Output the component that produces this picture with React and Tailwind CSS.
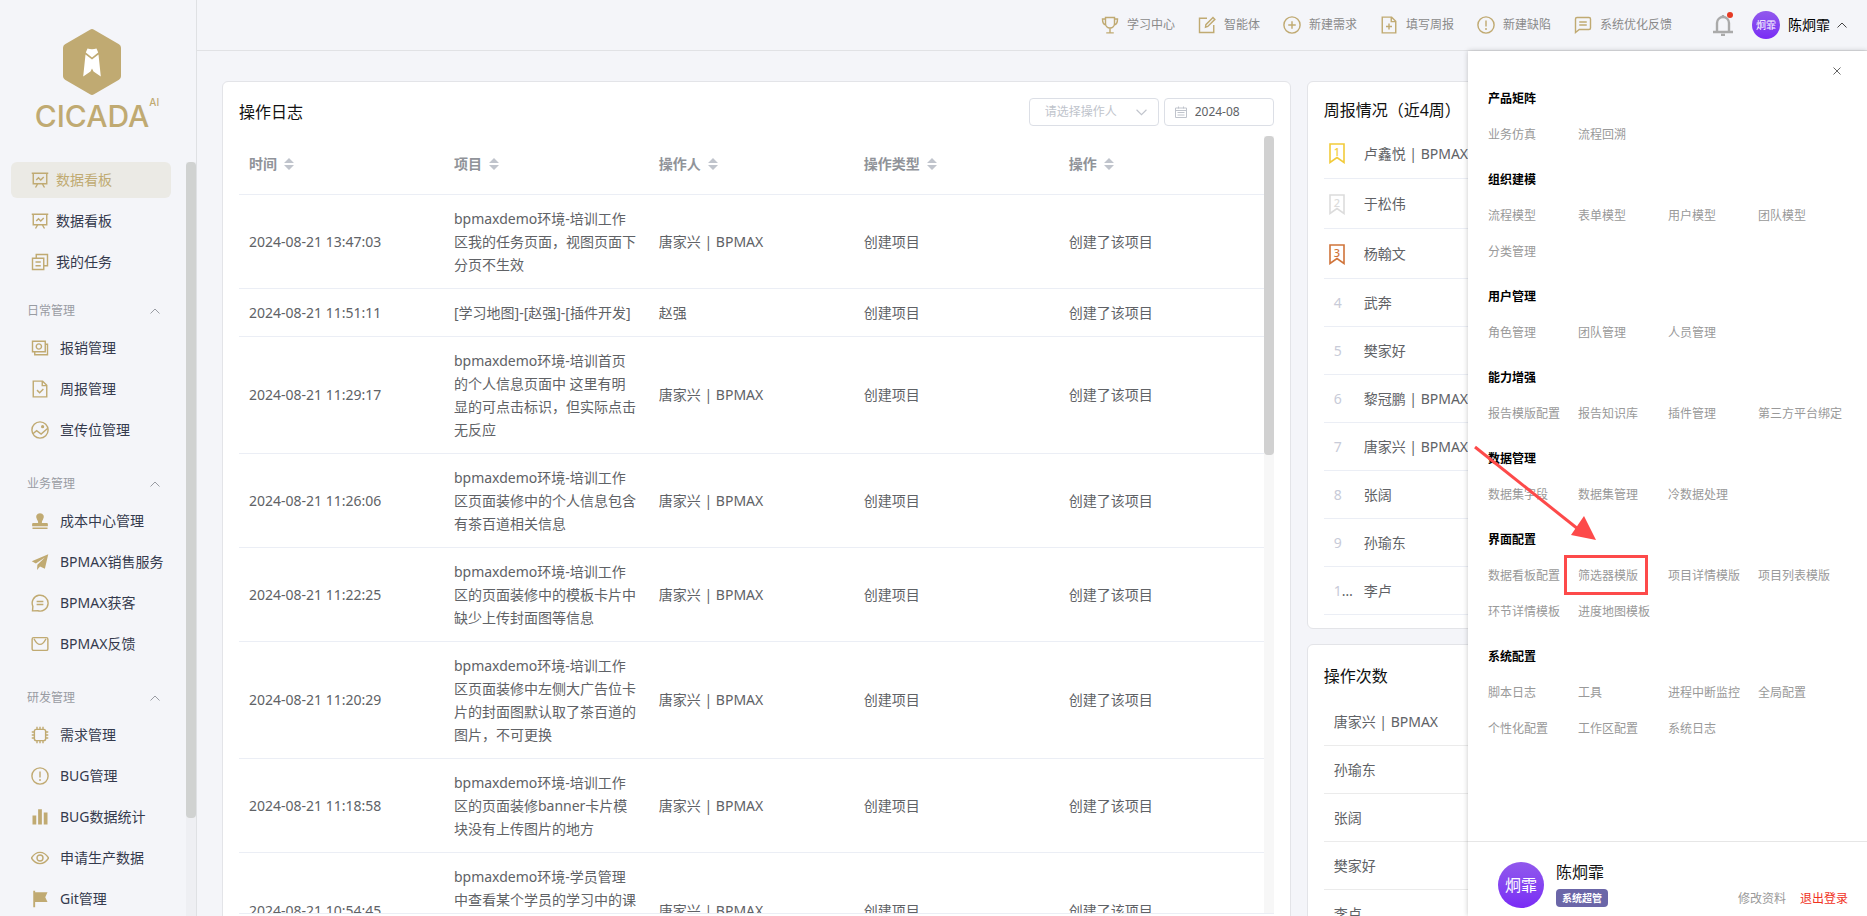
import { useState } from "react";

const gold = "#c0aa72";

const icons = {
    board: (
        <>
            <path d="M1 3h22M3 3v14h18V3M9 17l-3 5M15 17l3 5" />
            <path d="M7 12l3-3 3 3 4-4" />
        </>
    ),
    task: (
        <>
            <path d="M2 7h15v15H2z" />
            <path d="M7 7V2h15v15h-5M6 12h7M6 17h7" />
        </>
    ),
    cash: (
        <>
            <path d="M2 3h17v14H2z" />
            <circle cx="10.500" cy="10" r="3.500" />
            <path d="M19 7h3v14H5v-4" />
        </>
    ),
    fileCheck: (
        <>
            <path d="M3 1.500h12.500l5.500 5.500v15.500H3zM15 2v5.500h5.500" />
            <path d="M8 13.500l3.500 3.500 5-5" />
        </>
    ),
    filePlus: (
        <>
            <path d="M3 1.500h12.500l5.500 5.500v15.500H3zM15 2v5.500h5.500" />
            <path d="M12 10v8M8 14h8" />
        </>
    ),
    picture: (
        <>
            <circle cx="12" cy="12" r="10.800" />
            <path d="M2.500 17l5-4 6 4.500 8.500-7.500" />
            <circle cx="15.500" cy="7.500" r="1.200" fill="currentColor" />
        </>
    ),
    stamp: (
        <path
            stroke="none"
            fill="currentColor"
            d="M12 1.500a5.200 5.200 0 0 1 4 8.500c-1.200 1.500-1.700 3-1.500 4.500H21c.8 0 1.500.7 1.500 1.500v3h-21v-3c0-.8.7-1.500 1.500-1.500h6.500c.2-1.500-.3-3-1.500-4.500a5.200 5.200 0 0 1 4-8.500zM2 20.500h20v2H2z"
        />
    ),
    plane: (
        <path
            stroke="none"
            fill="currentColor"
            d="M23 1.500L1 11l5.500 3L18.500 6 8.500 15.500 8 22.500l4-4.500 6.500 3z"
        />
    ),
    chat: (
        <>
            <path d="M2 22.500l.5-6A10.600 10.600 0 1 1 9 22.300z" />
            <path d="M7.500 10h9M7.500 14h9" />
        </>
    ),
    mail: (
        <>
            <rect x="1.500" y="3.500" width="21" height="17" rx="2" />
            <path d="M4 5c3 6 6 7.500 8 7.500S17 11 20 5" />
        </>
    ),
    chip: (
        <>
            <rect x="4.500" y="4.500" width="15" height="15" rx="2.500" />
            <path d="M8 4.500V1M12 4.500V1M16 4.500V1M8 23v-3.500M12 23v-3.500M16 23v-3.500M4.500 8H1M4.500 12H1M4.500 16H1M23 8h-3.500M23 12h-3.500M23 16h-3.500" />
        </>
    ),
    warn: (
        <>
            <circle cx="12" cy="12" r="10.800" />
            <path d="M12 6v8M12 16v2.500" />
        </>
    ),
    bars: <path stroke="none" fill="currentColor" d="M2 10h5v12H2zM9.500 1.500h5V22h-5zM17 6h5v16h-5z" />,
    eye: (
        <>
            <path d="M.5 12C4 6.500 8 4.500 12 4.500S20 6.500 23.500 12C20 17.500 16 19.500 12 19.500S4 17.500.5 12z" />
            <circle cx="12" cy="12" r="4" />
        </>
    ),
    flag: <path stroke="none" fill="currentColor" d="M3 1h2.500v2H22l-3 6.500 3 6.500H5.500v7H3z" />,
    trophy: (
        <>
            <path d="M6 2h12v8a6 6 0 0 1-12 0zM6 4H2c0 5 1.500 7.500 4.500 8M18 4h4c0 5-1.500 7.500-4.500 8M12 16v6M7 22.500h10" />
        </>
    ),
    edit: (
        <>
            <path d="M12 3H2v19h19V12" />
            <path d="M10 15l.5-3.500 9.500-9.500 2.500 2.500-9.500 9.500z" />
        </>
    ),
    plus: (
        <>
            <circle cx="12" cy="12" r="10.800" />
            <path d="M12 7v10M7 12h10" />
        </>
    ),
    note: (
        <>
            <path d="M4 2h16a2 2 0 0 1 2 2v12a2 2 0 0 1-2 2H7l-5 4V4a2 2 0 0 1 2-2z" />
            <path d="M7 8h10M7 12h10" />
        </>
    ),
};

const topMenus = [
    { icon: "board", name: "数据看板", active: true },
    { icon: "board", name: "数据看板" },
    { icon: "task", name: "我的任务" },
];

const menuGroups = [
    {
        name: "日常管理",
        items: [
            { icon: "cash", name: "报销管理" },
            { icon: "fileCheck", name: "周报管理" },
            { icon: "picture", name: "宣传位管理" },
        ],
    },
    {
        name: "业务管理",
        items: [
            { icon: "stamp", name: "成本中心管理" },
            { icon: "plane", name: "BPMAX销售服务" },
            { icon: "chat", name: "BPMAX获客" },
            { icon: "mail", name: "BPMAX反馈" },
        ],
    },
    {
        name: "研发管理",
        items: [
            { icon: "chip", name: "需求管理" },
            { icon: "warn", name: "BUG管理" },
            { icon: "bars", name: "BUG数据统计" },
            { icon: "eye", name: "申请生产数据" },
            { icon: "flag", name: "Git管理" },
        ],
    },
];

const shortcuts = [
    { icon: "trophy", name: "学习中心" },
    { icon: "edit", name: "智能体" },
    { icon: "plus", name: "新建需求" },
    { icon: "filePlus", name: "填写周报" },
    { icon: "warn", name: "新建缺陷" },
    { icon: "note", name: "系统优化反馈" },
];

const logs = [
    { time: "2024-08-21 13:47:03", project: "bpmaxdemo环境-培训工作区我的任务页面，视图页面下分页不生效", user: "唐家兴 | BPMAX" },
    { time: "2024-08-21 11:51:11", project: "[学习地图]-[赵强]-[插件开发]", user: "赵强" },
    { time: "2024-08-21 11:29:17", project: "bpmaxdemo环境-培训首页的个人信息页面中 这里有明显的可点击标识，但实际点击无反应", user: "唐家兴 | BPMAX" },
    { time: "2024-08-21 11:26:06", project: "bpmaxdemo环境-培训工作区页面装修中的个人信息包含有茶百道相关信息", user: "唐家兴 | BPMAX" },
    { time: "2024-08-21 11:22:25", project: "bpmaxdemo环境-培训工作区的页面装修中的模板卡片中缺少上传封面图等信息", user: "唐家兴 | BPMAX" },
    { time: "2024-08-21 11:20:29", project: "bpmaxdemo环境-培训工作区页面装修中左侧大广告位卡片的封面图默认取了茶百道的图片，不可更换", user: "唐家兴 | BPMAX" },
    { time: "2024-08-21 11:18:58", project: "bpmaxdemo环境-培训工作区的页面装修banner卡片模块没有上传图片的地方", user: "唐家兴 | BPMAX" },
    { time: "2024-08-21 10:54:45", project: "bpmaxdemo环境-学员管理中查看某个学员的学习中的课程列表，已完成的课程没有显示对应数据", user: "唐家兴 | BPMAX" },
];

const weekly = ["卢鑫悦 | BPMAX", "于松伟", "杨翰文", "武奔", "樊家好", "黎冠鹏 | BPMAX", "唐家兴 | BPMAX", "张阔", "孙瑜东", "李卢"];
const medals = ["#f2cb3a", "#dcdcdc", "#d0743a"];
const counts = ["唐家兴 | BPMAX", "孙瑜东", "张阔", "樊家好", "李卢"];

const settings = [
    { title: "产品矩阵", items: ["业务仿真", "流程回溯"] },
    { title: "组织建模", items: ["流程模型", "表单模型", "用户模型", "团队模型", "分类管理"] },
    { title: "用户管理", items: ["角色管理", "团队管理", "人员管理"] },
    { title: "能力增强", items: ["报告模版配置", "报告知识库", "插件管理", "第三方平台绑定"] },
    { title: "数据管理", items: ["数据集字段", "数据集管理", "冷数据处理"] },
    { title: "界面配置", items: ["数据看板配置", "筛选器模版", "项目详情模版", "项目列表模版", "环节详情模板", "进度地图模板"] },
    { title: "系统配置", items: ["脚本日志", "工具", "进程中断监控", "全局配置", "个性化配置", "工作区配置", "系统日志"] },
];

function Icon({ name, className }) {
    return (
        <svg viewBox="0 0 24 24" className={className} fill="none" stroke="currentColor" strokeWidth="1.900" color={gold} aria-hidden="true">
            {icons[name]}
        </svg>
    );
}

function Chevron({ className }) {
    return (
        <svg viewBox="0 0 10 10" className={className} fill="none" stroke="currentColor" strokeWidth="1" aria-hidden="true">
            <path d="M.5 7.500L5 3l4.500 4.500" />
        </svg>
    );
}

function Logo() {
    return (
        <div className="flex flex-col items-center pt-[29px] pr-[20px] text-[#c0aa72]">
            <svg viewBox="0 0 58 66" className="w-[58px] h-[66px]" aria-hidden="true">
                <path fill="currentColor" d="M27 .7q2-1.200 4 0l25 14.500q2 1.200 2 3.500v28.600q0 2.300-2 3.500l-25 14.500q-2 1.200-4 0l-25-14.500q-2-1.200-2-3.500V18.700q0-2.300 2-3.500z" />
                <path fill="#fff" d="M24.500 19.500q4.500 1.500 9 0l1.700 4-6.200 5-6.200-5zM22.500 25.500l6.500 5 6.500-5 2.300 22-7.300-5-1.500-3-1.500 3-7.300 5z" />
            </svg>
            <div className="relative mt-[6px] text-[30px] leading-[30px] font-medium font-['Inter',sans-serif]">
                CICADA
                <sup className="absolute left-full -top-[4px] text-[10px] leading-[10px]">AI</sup>
            </div>
        </div>
    );
}

function Sidebar() {
    return (
        <aside className="flex w-[197px] shrink-0 flex-col border-r border-[#dfe1e4]">
            <div className="h-[162px] shrink-0 pl-[8px]">
                <Logo />
            </div>
            <div className="flex min-h-0 flex-1">
                <nav className="flex-1 overflow-hidden pl-[11px] pr-[15px] text-sm text-[#343a4d]">
                    {topMenus.map((item, i) => (
                        <a
                            key={i}
                            href="#"
                            className={`mb-[5px] flex h-[36px] items-center gap-[7px] rounded-md pl-[20px] ${item.active ? "bg-[#ebeae5] text-[#c0aa72]" : ""}`}
                        >
                            <Icon name={item.icon} className="w-[18px] h-[18px]" />
                            {item.name}
                        </a>
                    ))}
                    {menuGroups.map((group) => (
                        <div key={group.name} className="pt-[17px] pb-[5px]">
                            <button className="mb-[10px] flex h-[18px] w-full items-center justify-between pl-[16px] pr-[11px] text-xs text-[#999ca3]">
                                {group.name}
                                <Chevron className="w-[10px] h-[10px]" />
                            </button>
                            {group.items.map((item) => (
                                <a key={item.name} href="#" className="mb-[5px] flex h-[36px] items-center gap-[11px] pl-[20px] whitespace-nowrap">
                                    <Icon name={item.icon} className="w-[18px] h-[18px] shrink-0" />
                                    {item.name}
                                </a>
                            ))}
                        </div>
                    ))}
                </nav>
                <div className="w-[10px] bg-[#eeeff3]">
                    <div className="h-[87%] rounded bg-[#d0d2d1]"></div>
                </div>
            </div>
        </aside>
    );
}

function Header() {
    return (
        <header className="flex h-[51px] shrink-0 items-center justify-end border-b border-[#e1e2e5] pr-[20px]">
            <div className="mr-[40px] flex gap-[23px] text-xs text-[#8a8a8a]">
                {shortcuts.map((item) => (
                    <button key={item.name} className="flex items-center gap-[8px]">
                        <Icon name={item.icon} className="w-[18px] h-[18px]" />
                        {item.name}
                    </button>
                ))}
            </div>
            <button aria-label="消息" className="relative mr-[18px]">
                <svg viewBox="0 0 22 22" className="w-[22px] h-[22px]" fill="none" stroke="#aaaaaa" strokeWidth="2.400" aria-hidden="true">
                    <path d="M5 18V9a6 6 0 0 1 12 0v9M1 18h20M11 3V1M9 21h4" />
                </svg>
                <span className="absolute -top-[2px] right-[1px] h-[6px] w-[6px] rounded-full bg-[#e53a24]"></span>
            </button>
            <button className="flex items-center text-sm text-black">
                <span className="mr-[8px] flex h-[28px] w-[28px] items-center justify-center rounded-full bg-linear-to-b from-[#9158ec] to-[#7a2af5] text-[10px] text-white">
                    炯霏
                </span>
                陈炯霏
                <Chevron className="ml-[7px] w-[10px] h-[10px] text-[#444]" />
            </button>
        </header>
    );
}

function OperationLog() {
    const [month, setMonth] = useState("2024-08");

    return (
        <section className="flex h-[calc(100vh-64px)] min-w-0 flex-col rounded-md border border-[#e3e4e8] bg-white px-[16px] pt-[16px] pb-[18px]">
            <div className="mb-[10px] flex items-center justify-between">
                <h2 className="text-base text-[#111]">操作日志</h2>
                <div className="flex gap-[5px] text-xs">
                    <div className="relative">
                        <select aria-label="操作人" className="h-[28px] w-[130px] appearance-none rounded border border-[#dcdfe6] bg-white pl-[15px] text-[#c0c4cc]">
                            <option>请选择操作人</option>
                        </select>
                        <Chevron className="pointer-events-none absolute top-[9px] right-[12px] w-[11px] h-[11px] rotate-180 text-[#c0c4cc]" />
                    </div>
                    <div className="flex h-[28px] w-[110px] items-center gap-[8px] rounded border border-[#dcdfe6] pl-[10px]">
                        <svg viewBox="0 0 12 12" className="w-[12px] h-[12px] shrink-0" fill="none" stroke="#c0c4cc" aria-hidden="true">
                            <path d="M.5 2h11v9.500H.5zM.5 4.500h11M3.500.5v2M8.500.5v2M2.500 6.500h7M2.500 9h7" />
                        </svg>
                        <input
                            aria-label="月份"
                            className="w-full min-w-0 text-[#606266] outline-none"
                            value={month}
                            onChange={(e) => setMonth(e.target.value)}
                        />
                    </div>
                </div>
            </div>
            <div className="flex min-h-0 flex-1 border-b border-[#ebeef5]">
                <div className="min-w-0 flex-1 overflow-hidden">
                    <table className="w-full table-fixed text-left text-sm leading-[23px] text-[#606266]">
                        <thead>
                            <tr className="h-[58px] border-b border-[#ebeef5] text-[#909399]">
                                {["时间", "项目", "操作人", "操作类型", "操作"].map((name) => (
                                    <th key={name} className="px-[10px] pb-[2px] font-bold">
                                        <span className="flex items-center gap-[7px]">
                                            {name}
                                            <svg viewBox="0 0 10 12" className="w-[10px] h-[12px]" fill="#c0c4cc" aria-hidden="true">
                                                <path d="M0 5l5-5 5 5zM0 7h10l-5 5z" />
                                            </svg>
                                        </span>
                                    </th>
                                ))}
                            </tr>
                        </thead>
                        <tbody>
                            {logs.map((row) => (
                                <tr key={row.time} className="border-b border-[#ebeef5]">
                                    <td className="px-[10px] py-[12px]">{row.time}</td>
                                    <td className="px-[10px] py-[12px]">{row.project}</td>
                                    <td className="px-[10px] py-[12px]">{row.user}</td>
                                    <td className="px-[10px] py-[12px]">创建项目</td>
                                    <td className="px-[10px] py-[12px]">创建了该项目</td>
                                </tr>
                            ))}
                        </tbody>
                    </table>
                </div>
                <div className="w-[10px] bg-[#f7f7f7]">
                    <div className="h-[41%] rounded bg-[#d1d1d1]"></div>
                </div>
            </div>
        </section>
    );
}

function Medal({ rank, color }) {
    return (
        <svg viewBox="0 0 16 21" className="-ml-[5px] w-[16px] h-[21px]" fill="none" stroke={color} strokeWidth="1.600" aria-hidden="true">
            <path d="M1 1h14v18.500L8 14.500 1 19.500z" />
            <text x="8" y="12.500" fontSize="11" fontWeight="500" textAnchor="middle" fill={color} stroke="none">
                {rank}
            </text>
        </svg>
    );
}

function WeeklyReport() {
    return (
        <section className="rounded-md border border-[#e3e4e8] bg-white px-[16px] pt-[16px] pb-[13px]">
            <h2 className="mb-[6px] text-base text-[#111]">周报情况（近4周）</h2>
            <table className="w-full table-fixed text-left text-sm text-[#606266]">
                <tbody>
                    {weekly.map((name, i) => (
                        <tr key={name} className={`border-b border-[#ebeef5] ${i < 3 ? "h-[50px]" : "h-[48px]"}`}>
                            <td className="w-[30px] truncate pt-[2px] pl-[10px]">
                                {i < 3 ? <Medal rank={i + 1} color={medals[i]} /> : <span className="pr-[6px] text-[#c8cbd8]">{i + 1}</span>}
                            </td>
                            <td className="pt-[2px] pl-[10px]">{name}</td>
                        </tr>
                    ))}
                </tbody>
            </table>
        </section>
    );
}

function OperationCount() {
    return (
        <section className="rounded-md border border-[#e3e4e8] bg-white p-[16px]">
            <h2 className="mt-[3px] mb-[10px] text-base text-[#111]">操作次数</h2>
            <ul className="text-sm text-[#606266]">
                {counts.map((name) => (
                    <li key={name} className="flex h-[48px] items-center border-b border-[#ebebeb] pt-[2px] pl-[10px]">{name}</li>
                ))}
            </ul>
        </section>
    );
}

function Drawer({ onClose }) {
    return (
        <div className="absolute top-[51px] right-0 bottom-0 flex w-[399px] flex-col bg-white shadow-[0_0_5px_rgba(0,0,0,0.22)]">
            <button aria-label="关闭" onClick={onClose} className="absolute top-[16px] right-[26px] text-[#666]">
                <svg viewBox="0 0 8 8" className="w-[8px] h-[8px]" fill="none" stroke="currentColor" strokeWidth="1" aria-hidden="true">
                    <path d="M.5.5l7 7M7.500.5l-7 7" />
                </svg>
            </button>
            <div className="flex min-h-0 flex-1 flex-col gap-[9px] overflow-hidden pt-[30px] pl-[20px] text-xs leading-[36px]">
                {settings.map((group) => (
                    <div key={group.title}>
                        <h3 className="font-bold text-black">{group.title}</h3>
                        <div className="grid grid-cols-[90px_90px_90px_90px] text-[#999]">
                            {group.items.map((item) => (
                                <a key={item} href="#" className="relative whitespace-nowrap">
                                    {item}
                                    {item === "筛选器模版" && (
                                        <span className="absolute -top-[3px] -left-[14px] h-[40px] w-[84px] border-3 border-[#fd4a4a]"></span>
                                    )}
                                </a>
                            ))}
                        </div>
                    </div>
                ))}
            </div>
            <svg viewBox="0 0 124 98" className="pointer-events-none absolute top-[393px] left-[5px] w-[124px] h-[98px]" aria-hidden="true">
                <path d="M2 3l108 86" stroke="#fd4a4a" strokeWidth="3" />
                <path d="M123 96L98 91l13-19z" fill="#fd4a4a" />
            </svg>
            <div className="flex h-[75px] shrink-0 items-center border-t border-[#e6e6e6] pt-[11px] pr-[19px] pl-[30px]">
                <span className="flex h-[46px] w-[46px] shrink-0 items-center justify-center rounded-full bg-linear-to-b from-[#9158ec] to-[#7a2af5] text-base text-white">
                    炯霏
                </span>
                <div className="ml-[12px]">
                    <div className="text-base leading-[20px] text-[#111]">陈炯霏</div>
                    <div className="mt-[7px] rounded bg-[#6b66a8] px-[6px] text-[10px] leading-[18px] font-bold text-white">系统超管</div>
                </div>
                <div className="ml-auto flex gap-[14px] pt-[28px] text-xs">
                    <button className="text-[#999]">修改资料</button>
                    <button className="text-[#f0321e]">退出登录</button>
                </div>
            </div>
        </div>
    );
}

export default function App() {
    const [drawerOpen, setDrawerOpen] = useState(true);

    return (
        <div className="relative flex h-screen overflow-hidden bg-[#f4f5f9] font-['Noto_Sans','Noto_Sans_CJK_SC',sans-serif]">
            <Sidebar />
            <div className="flex min-w-0 flex-1 flex-col">
                <Header />
                <main className="min-h-0 flex-1 overflow-hidden pt-[30px] pr-[26px] pl-[25px]">
                    <div className="grid grid-cols-[2fr_1fr] items-start gap-[16px]">
                        <OperationLog />
                        <div className="flex min-w-0 flex-col gap-[15px]">
                            <WeeklyReport />
                            <OperationCount />
                        </div>
                    </div>
                </main>
            </div>
            {drawerOpen && <Drawer onClose={() => setDrawerOpen(false)} />}
        </div>
    );
}
